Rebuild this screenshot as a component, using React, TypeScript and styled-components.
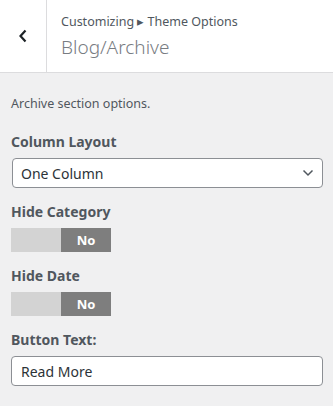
import React from "react";
import styled, { createGlobalStyle } from "styled-components";

const Global = createGlobalStyle`
  html, body { margin: 0; padding: 0; background: #f0f0f1; }
  body { font-family: "Noto Sans", "Open Sans", sans-serif; width: 333px; height: 406px; overflow: hidden; }
  * { box-sizing: border-box; }
`;

const Panel = styled.div`
  width: 333px;
  height: 406px;
  background: #f0f0f1;
  display: flex;
  flex-direction: column;
`;

const Header = styled.header`
  display: flex;
  height: 73px;
  background: #fff;
  border-bottom: 1px solid #dcdcde;
`;

const BackButton = styled.button`
  width: 47px;
  flex: none;
  border: none;
  border-right: 1px solid #dcdcde;
  background: #fff;
  display: flex;
  align-items: center;
  justify-content: center;
  padding: 0;
  color: #1d2327;
`;

const Titles = styled.div`
  display: flex;
  flex-direction: column;
  padding: 12px 0 0 14px;
`;

const Crumb = styled.span`
  font-size: 12.5px;
  line-height: 20px;
  color: #50575e;
`;

const Title = styled.h1`
  margin: 1px 0 0;
  font-size: 19px;
  font-weight: 300;
  line-height: 28px;
  color: #787c82;
`;

const Body = styled.div`
  display: flex;
  flex-direction: column;
  padding: 21px 10px 0 11px;
`;

const Description = styled.p`
  margin: 0 0 18px;
  font-size: 12.5px;
  line-height: 20px;
  color: #50575e;
`;

const Label = styled.label`
  display: block;
  font-size: 14px;
  font-weight: 700;
  line-height: 20px;
  color: #50575e;
  margin-bottom: 6px;
`;

const Control = styled.div`
  margin-bottom: 14px;
`;

const SelectBox = styled.div`
  margin-left: 1px;
  height: 30px;
  border: 1px solid #8c8f94;
  border-radius: 4px;
  background: #fff;
  display: flex;
  align-items: center;
  justify-content: space-between;
  padding: 0 8px 0 8px;
  font-size: 14px;
  color: #2c3338;
`;

const Toggle = styled.div`
  display: flex;
  width: 100px;
  height: 24px;
`;

const ToggleHalf = styled.span<{ $active?: boolean }>`
  flex: 1;
  display: flex;
  align-items: center;
  justify-content: center;
  background: ${(p) => (p.$active ? "#7e7e7e" : "#d3d3d3")};
  color: #fff;
  font-size: 13px;
  font-weight: 700;
`;

const TextInput = styled.div`
  height: 30px;
  width: 312px;
  border: 1px solid #8c8f94;
  border-radius: 4px;
  background: #fff;
  display: flex;
  align-items: center;
  padding: 0 9px;
  font-size: 14px;
  color: #2c3338;
`;

export default function App() {
  return (
    <Panel>
      <Global />
      <Header>
        <BackButton aria-label="Back">
          <svg width="10" height="14" viewBox="0 0 10 14">
            <path d="M7.5 1.5 L2.5 7 L7.5 12.5" fill="none" stroke="#1d2327" strokeWidth="2.2" />
          </svg>
        </BackButton>
        <Titles>
          <Crumb>Customizing ▸ Theme Options</Crumb>
          <Title>Blog/Archive</Title>
        </Titles>
      </Header>
      <Body>
        <Description>Archive section options.</Description>
        <Control>
          <Label>Column Layout</Label>
          <SelectBox>
            <span>One Column</span>
            <svg width="12" height="8" viewBox="0 0 12 8">
              <path d="M1.5 1.5 L6 6 L10.5 1.5" fill="none" stroke="#50575e" strokeWidth="1.5" />
            </svg>
          </SelectBox>
        </Control>
        <Control>
          <Label>Hide Category</Label>
          <Toggle>
            <ToggleHalf />
            <ToggleHalf $active>No</ToggleHalf>
          </Toggle>
        </Control>
        <Control>
          <Label>Hide Date</Label>
          <Toggle>
            <ToggleHalf />
            <ToggleHalf $active>No</ToggleHalf>
          </Toggle>
        </Control>
        <Control>
          <Label>Button Text:</Label>
          <TextInput>Read More</TextInput>
        </Control>
      </Body>
    </Panel>
  );
}
